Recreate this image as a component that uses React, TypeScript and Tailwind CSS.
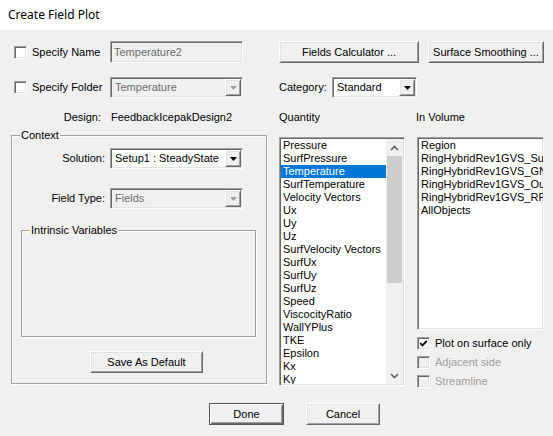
import React from "react";

const sunken =
  "border border-t-[#a0a0a0] border-l-[#a0a0a0] border-r-white border-b-white shadow-[inset_1px_1px_0_#696969,inset_-1px_-1px_0_#e3e3e3]";
const raised =
  "border border-t-white border-l-white border-r-[#696969] border-b-[#696969] shadow-[inset_1px_1px_0_#e3e3e3,inset_-1px_-1px_0_#a0a0a0]";

function CheckBox({ checked, disabled }: { checked?: boolean; disabled?: boolean }) {
  return (
    <div
      className={`w-[13px] h-[13px] shrink-0 flex items-center justify-center ${sunken} ${
        disabled ? "bg-[#f0f0f0]" : "bg-white"
      }`}
    >
      {checked && (
        <svg width="9" height="9" viewBox="0 0 9 9">
          <path d="M1.2 4.2 L3.5 6.5 L7.8 1.8" fill="none" stroke="#000" strokeWidth="1.9" />
        </svg>
      )}
    </div>
  );
}

function Combo({ value, disabled, w }: { value: string; disabled?: boolean; w: string }) {
  return (
    <div
      className={`flex h-[21px] shrink-0 p-[1px] ${w} ${sunken} ${disabled ? "bg-[#f0f0f0]" : "bg-white"}`}
    >
      <div
        className={`flex-1 flex items-center pl-[3px] whitespace-nowrap overflow-hidden ${
          disabled ? "text-[#6d6d6d]" : "text-black"
        }`}
      >
        {value}
      </div>
      <div className={`w-[16px] h-full flex items-center justify-center bg-[#f0f0f0] ${raised}`}>
        <svg width="7" height="4" viewBox="0 0 7 4">
          <polygon points="0,0 7,0 3.5,4" fill={disabled ? "#a0a0a0" : "#000"} />
        </svg>
      </div>
    </div>
  );
}

function Button({ label, w, def }: { label: string; w: string; def?: boolean }) {
  return (
    <div
      className={`h-[22px] ${w} shrink-0 flex items-center justify-center bg-[#f0f0f0] ${
        def
          ? "border border-[#555555] shadow-[inset_1px_1px_0_#fff,inset_-1px_-1px_0_#696969,inset_-2px_-2px_0_#a0a0a0]"
          : raised
      }`}
    >
      {label}
    </div>
  );
}

function Chevron({ up }: { up?: boolean }) {
  return (
    <svg width="9" height="6" viewBox="0 0 9 6">
      <polyline
        points={up ? "1,5 4.5,1.5 8,5" : "1,1 4.5,4.5 8,1"}
        fill="none"
        stroke="#606060"
        strokeWidth="1.6"
      />
    </svg>
  );
}

const quantities = [
  "Pressure",
  "SurfPressure",
  "Temperature",
  "SurfTemperature",
  "Velocity Vectors",
  "Ux",
  "Uy",
  "Uz",
  "SurfVelocity Vectors",
  "SurfUx",
  "SurfUy",
  "SurfUz",
  "Speed",
  "ViscocityRatio",
  "WallYPlus",
  "TKE",
  "Epsilon",
  "Kx",
  "Ky",
  "Kz",
];

const volumes = [
  "Region",
  "RingHybridRev1GVS_Substrate",
  "RingHybridRev1GVS_GND",
  "RingHybridRev1GVS_Outline",
  "RingHybridRev1GVS_RF_Layer",
  "AllObjects",
];

export default function App() {
  return (
    <div
      className="w-[553px] h-[436px] bg-white text-black text-[11px] leading-[13px] overflow-hidden"
      style={{ fontFamily: '"Liberation Sans", Arial, sans-serif' }}
    >
      <div
        className="h-[30px] flex items-center pl-[8px] pb-[1px] text-[12px] text-black"
        style={{ fontFamily: '"Noto Sans", "Liberation Sans", sans-serif' }}
      >
        Create Field Plot
      </div>
      <div className="h-[406px] bg-[#f0f0f0] flex flex-col pt-[11px]">
        <div className="h-[345px] flex">
          {/* Left column */}
          <div className="ml-[11px] w-[257px] flex flex-col">
            <div className="h-[22px] flex items-center">
              <div className="ml-[3px]">
                <CheckBox />
              </div>
              <div className="ml-[5px] w-[78px]">Specify Name</div>
              <div
                className={`w-[133px] h-[22px] flex items-center pl-[3px] bg-[#f0f0f0] text-[#6d6d6d] ${sunken}`}
              >
                Temperature2
              </div>
            </div>
            <div className="mt-[14px] h-[21px] flex items-center">
              <div className="ml-[3px]">
                <CheckBox />
              </div>
              <div className="ml-[5px] w-[78px]">Specify Folder</div>
              <Combo value="Temperature" disabled w="w-[133px]" />
            </div>
            <div className="mt-[13px] h-[13px] flex items-center">
              <div className="w-[90px] text-right">Design:</div>
              <div className="ml-[10px]">FeedbackIcepakDesign2</div>
            </div>
            {/* Context groupbox */}
            <div className="mt-[11px] relative w-[256px] h-[249px] border border-[#a0a0a0] shadow-[1px_1px_0_#fff,inset_1px_1px_0_#fff] flex flex-col">
              <div className="absolute -top-[7px] left-[8px] px-[1px] bg-[#f0f0f0]">Context</div>
              <div className="mt-[12px] h-[21px] flex items-center">
                <div className="w-[93px] text-right">Solution:</div>
                <div className="ml-[5px]">
                  <Combo value="Setup1 : SteadyState" w="w-[133px]" />
                </div>
              </div>
              <div className="mt-[19px] h-[21px] flex items-center">
                <div className="w-[93px] text-right">Field Type:</div>
                <div className="ml-[5px]">
                  <Combo value="Fields" disabled w="w-[133px]" />
                </div>
              </div>
              <div className="mt-[21px] ml-[9px] relative w-[235px] h-[107px] border border-[#a0a0a0] shadow-[1px_1px_0_#fff,inset_1px_1px_0_#fff]">
                <div className="absolute -top-[7px] left-[8px] px-[1px] bg-[#f0f0f0]">
                  Intrinsic Variables
                </div>
              </div>
              <div className="mt-[14px] ml-[78px]">
                <Button label="Save As Default" w="w-[113px]" />
              </div>
            </div>
          </div>

          {/* Right column */}
          <div className="ml-[11px] w-[266px] flex flex-col">
            <div className="h-[22px] flex items-center">
              <Button label="Fields Calculator ..." w="w-[140px]" />
              <div className="ml-[9px]">
                <Button label="Surface Smoothing ..." w="w-[116px]" />
              </div>
            </div>
            <div className="mt-[14px] h-[21px] flex items-center">
              <div className="w-[53px]">Category:</div>
              <Combo value="Standard" w="w-[85px]" />
            </div>
            <div className="mt-[13px] h-[13px] flex items-center">
              <div className="w-[137px]">Quantity</div>
              <div>In Volume</div>
            </div>
            <div className="mt-[13px] flex">
              {/* Quantity list */}
              <div className={`w-[126px] h-[249px] bg-white p-[1px] flex ${sunken}`}>
                <div className="flex-1 overflow-hidden">
                  {quantities.map((q) => (
                    <div
                      key={q}
                      className={`h-[13px] leading-[13px] pl-[2px] whitespace-nowrap ${
                        q === "Temperature" ? "bg-[#0078d7] text-white" : ""
                      }`}
                    >
                      {q}
                    </div>
                  ))}
                </div>
                <div className="w-[17px] h-full bg-[#f0f0f0] flex flex-col">
                  <div className="h-[17px] flex items-center justify-center">
                    <Chevron up />
                  </div>
                  <div className="flex-1">
                    <div className="ml-[1px] mr-[1px] h-[127px] bg-[#cdcdcd]" />
                  </div>
                  <div className="h-[17px] flex items-center justify-center">
                    <Chevron />
                  </div>
                </div>
              </div>
              {/* In Volume */}
              <div className="ml-[12px] flex flex-col">
                <div className={`w-[127px] h-[193px] bg-white p-[1px] overflow-hidden ${sunken}`}>
                  {volumes.map((v) => (
                    <div key={v} className="h-[13px] leading-[13px] pl-[2px] whitespace-nowrap">
                      {v}
                    </div>
                  ))}
                </div>
                <div className="mt-[4px] h-[19px] flex items-center">
                  <CheckBox checked />
                  <div className="ml-[5px]">Plot on surface only</div>
                </div>
                <div className="h-[19px] flex items-center">
                  <CheckBox disabled />
                  <div className="ml-[5px] text-[#a0a0a0]">Adjacent side</div>
                </div>
                <div className="h-[19px] flex items-center">
                  <CheckBox disabled />
                  <div className="ml-[5px] text-[#a0a0a0]">Streamline</div>
                </div>
              </div>
            </div>
          </div>
        </div>
        <div className="mt-[17px] ml-[209px] flex">
          <Button label="Done" w="w-[75px]" def />
          <div className="ml-[22px]">
            <Button label="Cancel" w="w-[74px]" />
          </div>
        </div>
      </div>
    </div>
  );
}
